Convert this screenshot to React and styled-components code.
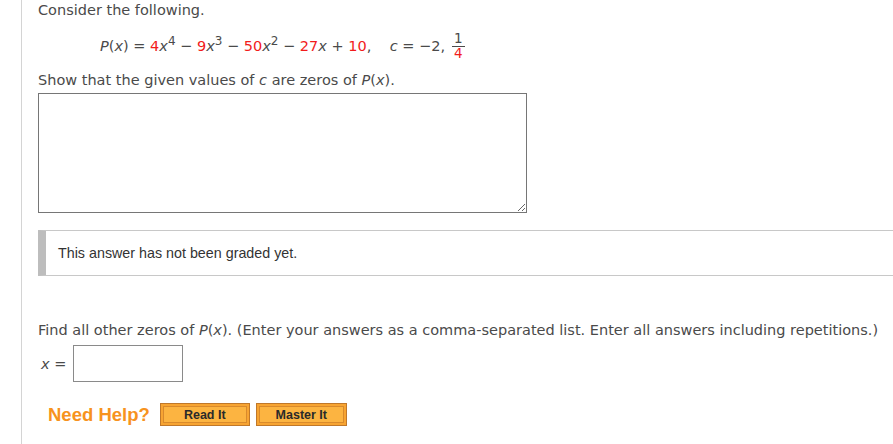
import styled, { createGlobalStyle } from "styled-components";

const GlobalStyle = createGlobalStyle`
  html, body {
    margin: 0;
    padding: 0;
    background: #fff;
    overflow: hidden;
  }
`;

const Page = styled.div`
  margin-left: 21px;
  border-left: 1px solid #d4d4d4;
  min-height: 444px;
  padding: 1px 0 0 16px;
  font-family: "DejaVu Sans", Verdana, sans-serif;
  font-size: 14.5px;
  color: #4a4a4a;
`;

const Para = styled.p`
  margin: ${(p) => p.$margin || "0"};
  line-height: 18px;
  white-space: nowrap;
`;

const Formula = styled.div`
  display: flex;
  align-items: center;
  padding-left: 62px;
  margin: 12px 0 10px;
  height: 30px;
`;

const Expression = styled.span`
  white-space: pre;
  line-height: 18px;
`;

const Red = styled.span`
  color: #f21b1b;
`;

const Var = styled.i`
  font-style: italic;
`;

const Sup = styled.sup`
  font-size: 12px;
  line-height: 0;
  vertical-align: 6px;
`;

const Fraction = styled.span`
  display: inline-flex;
  flex-direction: column;
  align-items: center;
  margin-left: 7px;
  font-size: 13.5px;
  line-height: 13px;
`;

const Numer = styled.span`
  padding: 0 2px 1px;
  border-bottom: 1px solid #4a4a4a;
`;

const TextArea = styled.textarea`
  display: block;
  box-sizing: border-box;
  width: 489px;
  height: 120px;
  margin: 4px 0 0;
  border: 1px solid #767676;
  border-radius: 0;
  padding: 4px;
  font-family: inherit;
`;

const GradeBox = styled.div`
  margin-top: 17px;
  height: 44px;
  display: flex;
  align-items: center;
  border-top: 1px solid #c8c8c8;
  border-bottom: 1px solid #c8c8c8;
  border-left: 8px solid #bdbdbd;
  padding-left: 12px;
  font-family: "Liberation Sans", Arial, sans-serif;
  font-size: 14.3px;
  color: #333;
`;

const AnswerRow = styled.div`
  display: flex;
  align-items: center;
  gap: 7px;
  margin-top: 6px;
  padding-left: 3px;
`;

const AnswerInput = styled.input`
  box-sizing: border-box;
  width: 110px;
  height: 37px;
  border: 1px solid #8a8a8a;
  border-radius: 0;
  margin: 0;
`;

const HelpRow = styled.div`
  display: flex;
  align-items: center;
  margin-top: 21px;
  padding-left: 10px;
`;

const HelpLabel = styled.span`
  font-family: "Liberation Sans", Arial, sans-serif;
  font-weight: bold;
  font-size: 18.5px;
  color: #f7931e;
  margin-right: 10px;
`;

const HelpButton = styled.button`
  box-sizing: border-box;
  width: ${(p) => p.$width}px;
  height: 23px;
  margin-right: 6px;
  padding: 0;
  border: 1px solid #c0782a;
  background: #fcb441;
  box-shadow: inset 0 0 0 2px #f7a432, inset 0 0 0 3px #d98a2c;
  font-family: "Liberation Sans", Arial, sans-serif;
  font-weight: bold;
  font-size: 12.5px;
  color: #2a2a2a;
  cursor: pointer;
`;

export default function App() {
  return (
    <>
      <GlobalStyle />
      <Page>
        <Para>Consider the following.</Para>
        <Formula>
          <Expression>
            <Var>P</Var>(<Var>x</Var>) = <Red>4</Red><Var>x</Var><Sup>4</Sup> − <Red>9</Red>
            <Var>x</Var><Sup>3</Sup> − <Red>50</Red><Var>x</Var><Sup>2</Sup> − <Red>27</Red>
            <Var>x</Var> + <Red>10</Red>,    <Var>c</Var> = −2,
          </Expression>
          <Fraction>
            <Numer>1</Numer>
            <Red>4</Red>
          </Fraction>
        </Formula>
        <Para>
          Show that the given values of <Var>c</Var> are zeros of <Var>P</Var>(
          <Var>x</Var>).
        </Para>
        <TextArea />
        <GradeBox>This answer has not been graded yet.</GradeBox>
        <Para $margin="45px 0 0">
          Find all other zeros of <Var>P</Var>(<Var>x</Var>). (Enter your answers as a
          comma-separated list. Enter all answers including repetitions.)
        </Para>
        <AnswerRow>
          <span>
            <Var>x</Var> =
          </span>
          <AnswerInput type="text" />
        </AnswerRow>
        <HelpRow>
          <HelpLabel>Need Help?</HelpLabel>
          <HelpButton $width={90}>Read It</HelpButton>
          <HelpButton $width={91}>Master It</HelpButton>
        </HelpRow>
      </Page>
    </>
  );
}
